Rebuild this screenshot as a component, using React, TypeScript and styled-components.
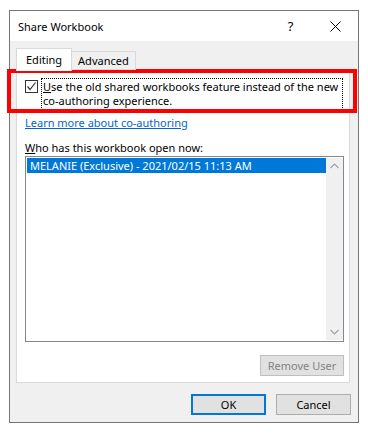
import React from "react";
import styled, { createGlobalStyle } from "styled-components";

const GlobalStyle = createGlobalStyle`
  html, body {
    margin: 0;
    padding: 0;
    background: #ffffff;
  }
  body {
    font-family: "Noto Sans", "Open Sans", sans-serif;
    font-size: 11px;
    color: #000000;
  }
`;

const Page = styled.div`
  position: relative;
  width: 368px;
  height: 434px;
  box-sizing: border-box;
  padding: 10px 10px 11px 9px;
  background: #ffffff;
`;

const Window = styled.div`
  width: 350px;
  height: 413px;
  box-sizing: border-box;
  border: 1px solid #767676;
  background: #f0f0f0;
  display: flex;
  flex-direction: column;
`;

const TitleBar = styled.div`
  height: 30px;
  flex-shrink: 0;
  background: #ffffff;
  display: flex;
  align-items: center;
  padding-left: 8px;
`;

const Title = styled.span`
  flex: 1;
  font-size: 11px;
`;

const TitleButton = styled.div`
  width: 45px;
  height: 30px;
  display: flex;
  align-items: center;
  justify-content: center;
  font-size: 13px;
`;

const Body = styled.div`
  flex: 1;
  display: flex;
  flex-direction: column;
  padding: 7px 8px 8px 6px;
`;

const Tabs = styled.div`
  display: flex;
  align-items: flex-end;
  height: 22px;
  position: relative;
  z-index: 1;
`;

const Tab = styled.div<{ active?: boolean }>`
  box-sizing: border-box;
  height: ${(p) => (p.active ? "23px" : "19px")};
  margin-bottom: ${(p) => (p.active ? "-1px" : "0")};
  padding: ${(p) => (p.active ? "0 9px 1px 9px" : "0 6px 0 6px")};
  border: 1px solid #d9d9d9;
  border-bottom: ${(p) => (p.active ? "none" : "1px solid #d9d9d9")};
  border-left: ${(p) => (p.active ? "1px solid #d9d9d9" : "none")};
  background: ${(p) => (p.active ? "#ffffff" : "#f0f0f0")};
  display: flex;
  align-items: center;
`;

const Panel = styled.div`
  height: 313px;
  box-sizing: border-box;
  border: 1px solid #d9d9d9;
  background: #ffffff;
  display: flex;
  flex-direction: column;
  padding: 7px 5px 0 8px;
`;

const CheckRow = styled.div`
  display: flex;
  align-items: flex-start;
  gap: 3px;
`;

const Box = styled.div`
  width: 13px;
  height: 13px;
  box-sizing: border-box;
  border: 1px solid #333333;
  margin-top: 2px;
  flex-shrink: 0;
  display: flex;
  align-items: center;
  justify-content: center;
`;

const FocusLabel = styled.div`
  width: 302px;
  box-sizing: border-box;
  border: 1px dotted #000000;
  padding: 1px;
  line-height: 14px;
  white-space: nowrap;
`;

const Link = styled.a`
  margin-top: 5px;
  color: #0066cc;
  text-decoration: underline;
  line-height: 15px;
`;

const Caption = styled.div`
  margin-top: 10px;
  line-height: 15px;
`;

const ListBox = styled.div`
  margin-top: 1px;
  width: 319px;
  height: 186px;
  box-sizing: border-box;
  border: 1px solid #828790;
  display: flex;
  padding: 1px 0 1px 1px;
`;

const Items = styled.div`
  flex: 1;
`;

const Item = styled.div<{ selected?: boolean }>`
  height: 15px;
  line-height: 15px;
  padding-left: 3px;
  background: ${(p) => (p.selected ? "#0078d7" : "transparent")};
  color: ${(p) => (p.selected ? "#ffffff" : "#000000")};
`;

const ScrollBar = styled.div`
  width: 17px;
  background: #f0f0f0;
  display: flex;
  flex-direction: column;
  justify-content: space-between;
  align-items: center;
  padding: 5px 0;
`;

const PanelFooter = styled.div`
  display: flex;
  justify-content: flex-end;
  margin-top: 13px;
`;

const Button = styled.div<{ primary?: boolean; disabled?: boolean; wide?: boolean }>`
  width: ${(p) => (p.wide ? "84px" : "75px")};
  height: 21px;
  box-sizing: border-box;
  display: flex;
  align-items: center;
  justify-content: center;
  white-space: nowrap;
  background: #e1e1e1;
  border: ${(p) =>
    p.primary ? "2px solid #0078d7" : p.disabled ? "1px solid #bfbfbf" : "1px solid #adadad"};
  color: ${(p) => (p.disabled ? "#838383" : "#000000")};
`;

const Footer = styled.div`
  display: flex;
  justify-content: flex-end;
  gap: 10px;
  margin-top: 11px;
  margin-right: -1px;
`;

const Highlight = styled.div`
  position: absolute;
  left: 7px;
  top: 69px;
  width: 350px;
  height: 44px;
  box-sizing: border-box;
  border: 4px solid #ff0000;
  pointer-events: none;
`;

const U = styled.span`
  text-decoration: underline;
`;

export default function App() {
  return (
    <Page>
      <GlobalStyle />
      <Window>
        <TitleBar>
          <Title>Share Workbook</Title>
          <TitleButton>?</TitleButton>
          <TitleButton>
            <svg width="11" height="11" viewBox="0 0 11 11">
              <path d="M0.5 0.5 L10.5 10.5 M10.5 0.5 L0.5 10.5" stroke="#000" strokeWidth="1" />
            </svg>
          </TitleButton>
        </TitleBar>
        <Body>
          <Tabs>
            <Tab active>Editing</Tab>
            <Tab>Advanced</Tab>
          </Tabs>
          <Panel>
            <CheckRow>
              <Box>
                <svg width="11" height="11" viewBox="0 0 11 11">
                  <path d="M1.5 5.5 L4 8.5 L9.5 1.5" fill="none" stroke="#333" strokeWidth="1.2" />
                </svg>
              </Box>
              <FocusLabel>
                <U>U</U>
                <span>se the old shared workbooks feature instead of the new</span>
                <br />
                <span>co-authoring experience.</span>
              </FocusLabel>
            </CheckRow>
            <Link>Learn more about co-authoring</Link>
            <Caption>
              <U>W</U>ho has this workbook open now:
            </Caption>
            <ListBox>
              <Items>
                <Item selected>MELANIE (Exclusive) - 2021/02/15 11:13 AM</Item>
              </Items>
              <ScrollBar>
                <svg width="9" height="6" viewBox="0 0 9 6">
                  <path d="M0.5 5 L4.5 1 L8.5 5" fill="none" stroke="#a3a3a3" strokeWidth="1.2" />
                </svg>
                <svg width="9" height="6" viewBox="0 0 9 6">
                  <path d="M0.5 1 L4.5 5 L8.5 1" fill="none" stroke="#a3a3a3" strokeWidth="1.2" />
                </svg>
              </ScrollBar>
            </ListBox>
            <PanelFooter>
              <Button disabled wide>Remove User</Button>
            </PanelFooter>
          </Panel>
          <Footer>
            <Button primary>OK</Button>
            <Button>Cancel</Button>
          </Footer>
        </Body>
      </Window>
      <Highlight />
    </Page>
  );
}
